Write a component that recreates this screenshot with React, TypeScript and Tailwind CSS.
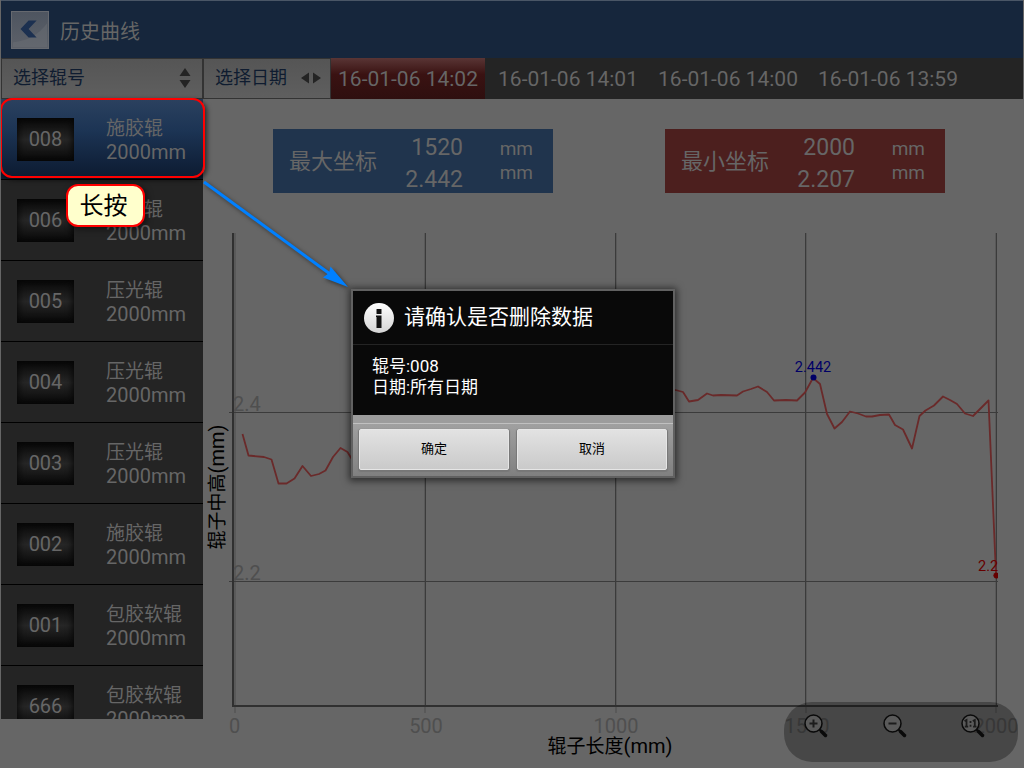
import React, { useState } from "react";

const rollers = [
  { id: "008", name: "施胶辊", length: "2000mm" },
  { id: "006", name: "施胶辊", length: "2000mm" },
  { id: "005", name: "压光辊", length: "2000mm" },
  { id: "004", name: "压光辊", length: "2000mm" },
  { id: "003", name: "压光辊", length: "2000mm" },
  { id: "002", name: "施胶辊", length: "2000mm" },
  { id: "001", name: "包胶软辊", length: "2000mm" },
  { id: "666", name: "包胶软辊", length: "2000mm" },
];

const dates = ["16-01-06 14:02", "16-01-06 14:01", "16-01-06 14:00", "16-01-06 13:59"];

const leftCurve =
  "242.5,434 248.5,455.5 264,457 271.5,459.5 278.5,483.5 286.5,483.5 294.5,478.5 302.5,466 311,476 319,474 325.5,470.5 333,457 340.5,448 347.5,452 356,466";
const rightCurve =
  "634,411 648,410 662,402 668,392 675.5,390 683,392 689,401.5 698,400 707,393.5 713,395.5 721,395 737,395.5 743,391.5 751,389 758,386.5 767,392 774,400.5 786,400 797,400.5 805,392.5 813,378 820,384 827,414 834.5,428.5 842,422 850,411.5 858,413.5 866,416.5 872,416.5 880,415 889,414.5 895,425 903,429.5 912,448.5 919.5,416 925.5,410.5 934,405.5 943,396.5 950,400 957,404 965,413.5 973,416 988.5,400.5 996,575";

function Header() {
  return (
    <header className="flex h-[58px] shrink-0 items-center gap-[11px] border-t border-[#4a5666] bg-[#16263c] px-2.5">
      <button
        type="button"
        aria-label="返回"
        className="flex size-[38px] items-center justify-center border border-[#66696f] bg-linear-to-b from-[#4e5560] to-[#5d6169]"
      >
        <svg viewBox="0 0 38 38" className="size-9">
          <path d="M1 32 Q24 30 37 12 V37 H1 Z" fill="#6a6d73" opacity="0.5" />
          <path d="M17.5 9 H26 L17.5 18 L26 27 H17.5 L9 18 Z" fill="#1c3050" />
        </svg>
      </button>
      <h1 className="pt-1 text-xl text-[#666]">历史曲线</h1>
    </header>
  );
}

function Toolbar({ active, onSelect }: { active: number; onSelect: (i: number) => void }) {
  return (
    <div className="flex h-[41px] shrink-0 bg-[#242424]">
      <button
        type="button"
        className="flex w-[202px] shrink-0 items-center justify-between border border-[#333] bg-linear-to-b from-[#555] to-[#5f5f5f] pr-[11px] pb-0.5 pl-[11px] text-lg text-[#0f1c30]"
      >
        选择辊号
        <svg viewBox="0 0 12 20" className="h-5 w-3">
          <path d="M6 0 L11.5 8 H0.5 Z M0.5 12 H11.5 L6 20 Z" fill="#242424" />
        </svg>
      </button>
      <button
        type="button"
        className="flex w-32 shrink-0 items-center justify-between border border-[#333] bg-linear-to-b from-[#555] to-[#5f5f5f] pr-[9px] pb-0.5 pl-[11px] text-lg text-[#0f1c30]"
      >
        选择日期
        <svg viewBox="0 0 20 12" className="h-3 w-5">
          <path d="M8 0.5 V11.5 L0 6 Z M12 0.5 V11.5 L20 6 Z" fill="#242424" />
        </svg>
      </button>
      <nav className="flex min-w-0 flex-1 gap-1.5 overflow-hidden">
        {dates.map((d, i) => (
          <button
            key={d}
            type="button"
            onClick={() => onSelect(i)}
            className={
              "w-[154px] shrink-0 pt-[3px] text-center text-[21px] whitespace-nowrap text-[#666] " +
              (i === active ? "bg-linear-to-b from-[#593535] via-[#3a1212] via-40% to-[#2e0f0f]" : "")
            }
          >
            {d}
          </button>
        ))}
      </nav>
    </div>
  );
}

function RollerList() {
  return (
    <aside className="mb-[49px] w-[202px] shrink-0 overflow-hidden bg-[#242424]">
      <ul>
        {rollers.map((r, i) => (
          <li key={r.id} className="border-b border-black">
            <button
              type="button"
              className={
                "flex h-20 w-full items-center gap-8 pl-4 text-left text-[#666] " +
                (i === 0 ? "bg-linear-to-b from-[#2b415f] via-[#1c3454] via-40% to-[#0c1a30]" : "")
              }
            >
              <span className="flex h-[43px] w-[57px] shrink-0 items-center justify-center bg-linear-to-b from-[#090909] via-[#262626] to-[#090909] text-xl shadow-[inset_0_0_7px_1px_#050505]">
                {r.id}
              </span>
              <span className="flex flex-col pt-[3px]">
                <span className="text-[19px] leading-[23px]">{r.name}</span>
                <span className="text-xl leading-6">{r.length}</span>
              </span>
            </button>
          </li>
        ))}
      </ul>
    </aside>
  );
}

function ExtremeCard({ label, x, y, tone }: { label: string; x: string; y: string; tone: string }) {
  return (
    <section className={"flex h-16 w-[280px] items-center px-4 text-[#666] " + tone}>
      <h2 className="text-[22px]">{label}</h2>
      <div className="flex flex-1 flex-col pt-1.5 text-right text-[23px] leading-8">
        <span>{x}</span>
        <span>{y}</span>
      </div>
      <div className="flex w-[74px] flex-col pr-1 text-right text-[19px] leading-6">
        <span>mm</span>
        <span>mm</span>
      </div>
    </section>
  );
}

function Chart() {
  return (
    <svg
      viewBox="203 193 820 575"
      preserveAspectRatio="xMidYMin meet"
      className="min-h-0 w-full flex-1 text-xl"
      role="img"
      aria-label="辊子中高(mm)"
    >
      <g stroke="#595959" strokeWidth="2">
        <path d="M425 233 V713 M616 233 V713 M806 233 V713 M996 233 V713" />
        <path d="M235 233 V713" />
      </g>
      <g stroke="#3b3b3b" strokeWidth="1" shapeRendering="crispEdges">
        <path d="M425.5 233 V706 M615.5 233 V706 M805.5 233 V706 M996.5 233 V706" />
        <path d="M229 412.5 H998 M229 581.5 H998" />
      </g>
      <path d="M233 233 V706 H998" fill="none" stroke="#303030" strokeWidth="2" />
      <g fill="#4f4f4f">
        <text x="233" y="411">2.4</text>
        <text x="233" y="580">2.2</text>
        <g textAnchor="middle">
          <text x="234.5" y="733">0</text>
          <text x="426" y="733">500</text>
          <text x="616" y="733">1000</text>
          <text x="807" y="733">1500</text>
          <text x="996" y="733">2000</text>
        </g>
      </g>
      <g fill="none" stroke="#6a2a2a" strokeWidth="1.8" strokeLinejoin="round">
        <polyline points={leftCurve} />
        <polyline points={rightCurve} />
      </g>
      <circle cx="813.5" cy="377.5" r="3" fill="#000066" />
      <path d="M998 573 A3 3 0 1 0 998 578 Z" fill="#660000" />
      <text x="813" y="372" textAnchor="middle" fontSize="14.5" fill="#000066">
        2.442
      </text>
      <text x="978" y="571" fontSize="14.5" fill="#660000">
        2.2
      </text>
      <g fill="#000" textAnchor="middle">
        <text x="610" y="753" fontSize="19">
          辊子长度<tspan fontSize="20">(mm)</tspan>
        </text>
        <text transform="translate(224 487) rotate(-90)" fontSize="19">
          辊子中高<tspan fontSize="20">(mm)</tspan>
        </text>
      </g>
    </svg>
  );
}

function ZoomIcon({ kind }: { kind: "in" | "out" | "reset" }) {
  return (
    <svg viewBox="0 0 24 24" className="size-6">
      <circle cx="9.5" cy="9.5" r="8.5" fill="#5a5a5a" stroke="#0a0a0a" strokeWidth="1.5" />
      <path d="M15.5 15.5 L18 18" stroke="#0a0a0a" strokeWidth="2" />
      <path d="M17.5 17.5 L21.5 21.5" stroke="#0a0a0a" strokeWidth="3.5" strokeLinecap="round" />
      {kind === "in" && <path d="M5.5 9.5 H13.5 M9.5 5.5 V13.5" stroke="#1c1c1c" strokeWidth="2" />}
      {kind === "out" && <path d="M5.5 9.5 H13.5" stroke="#1c1c1c" strokeWidth="2" />}
      {kind === "reset" && (
        <path
          d="M3.5 7 L5.5 6 V13 M3.8 12.7 H7.2 M11.8 7 L13.8 6 V13 M12.1 12.7 H15.5 M9.5 7 V9 M9.5 10.8 V12.8"
          fill="none"
          stroke="#1c1c1c"
          strokeWidth="1.8"
        />
      )}
    </svg>
  );
}

function ZoomBar() {
  return (
    <div className="absolute right-[5px] bottom-1.5 flex h-[60px] w-[234px] items-start justify-between rounded-[28px] bg-black/30 pt-3 pr-[33px] pl-5">
      <button type="button" aria-label="放大">
        <ZoomIcon kind="in" />
      </button>
      <button type="button" aria-label="缩小">
        <ZoomIcon kind="out" />
      </button>
      <button type="button" aria-label="原始大小">
        <ZoomIcon kind="reset" />
      </button>
    </div>
  );
}

function ConfirmDialog() {
  const buttonClass =
    "h-[41px] flex-1 rounded-xs border border-[#e6e6e6] bg-linear-to-b from-[#e2e2e2] to-[#cacaca] text-[13px] text-black shadow-[0_1px_1px_1px_#777]";
  return (
    <div className="absolute inset-0 flex items-center justify-center pb-0.5 pl-0.5">
      <div
        role="alertdialog"
        aria-labelledby="confirm-title"
        className="w-[324px] border-2 border-[#616161] bg-[#090909] text-white shadow-[0_1px_7px_2px_rgba(0,0,0,0.55)]"
      >
        <div className="flex h-[54px] items-center gap-2.5 border-b border-[#242424] pt-0.5 pl-[11px]">
          <svg viewBox="0 0 30 30" className="size-[30px]">
            <defs>
              <linearGradient id="info" x1="0" y1="0" x2="0" y2="1">
                <stop offset="0" stopColor="#fff" />
                <stop offset="1" stopColor="#d4d4d4" />
              </linearGradient>
            </defs>
            <circle cx="15" cy="15" r="15" fill="url(#info)" />
            <rect x="12.5" y="6" width="5" height="5" rx="0.5" fill="#111" />
            <path d="M12 12.5 H17.5 V25 H12.5 V14 H12 Z" fill="#111" />
          </svg>
          <h2 id="confirm-title" className="text-[21px]">
            请确认是否删除数据
          </h2>
        </div>
        <div className="h-[70px] pt-[11px] pl-[19px] text-[17px] leading-[21px]">
          <p>辊号:008</p>
          <p>日期:所有日期</p>
        </div>
        <div className="h-2 bg-[#9c9c9c]" />
        <div className="flex gap-2 border-t border-[#c0c0c0] bg-linear-to-b from-[#a0a0a0] to-[#808080] px-1.5 pt-[5px] pb-1.5">
          <button type="button" className={buttonClass}>
            确定
          </button>
          <button type="button" className={buttonClass}>
            取消
          </button>
        </div>
      </div>
    </div>
  );
}

function Annotations() {
  return (
    <>
      <div className="absolute top-[98px] -left-px h-20 w-[205px] rounded-xl border-2 border-[#ff0000] shadow-[2px_2px_5px_rgba(0,0,0,0.6)]" />
      <div className="absolute top-[184px] left-[65px] flex h-[43px] w-[79px] items-center justify-center rounded-xl border-2 border-[#ff0000] bg-[#ffffcc] pr-1 text-2xl text-black shadow-[2px_2px_6px_rgba(0,0,0,0.5)]">
        长按
      </div>
      <svg
        viewBox="0 0 160 120"
        className="absolute top-[176px] left-[197px] h-[120px] w-40 drop-shadow-[2px_2px_2px_rgba(0,0,0,0.5)]"
      >
        <path d="M6 6 L132 98" stroke="#0080ff" strokeWidth="3" />
        <path d="M150 111 L125 101.5 L131 97 L132.5 90.5 Z" fill="#0080ff" />
      </svg>
    </>
  );
}

export default function App() {
  const [active, setActive] = useState(0);
  return (
    <div className="relative flex h-screen min-h-[600px] flex-col overflow-hidden border-x border-[#666] bg-[#666] font-[Roboto,'Noto_Sans_CJK_SC',sans-serif]">
      <Header />
      <Toolbar active={active} onSelect={setActive} />
      <div className="flex min-h-0 flex-1">
        <RollerList />
        <main className="flex min-w-0 flex-1 flex-col pt-[30px]">
          <div className="flex justify-center gap-28 pr-2">
            <ExtremeCard label="最大坐标" x="1520" y="2.442" tone="bg-[#20344d]" />
            <ExtremeCard label="最小坐标" x="2000" y="2.207" tone="bg-[#4c1f1e]" />
          </div>
          <Chart />
        </main>
      </div>
      <ZoomBar />
      <Annotations />
      <ConfirmDialog />
    </div>
  );
}
